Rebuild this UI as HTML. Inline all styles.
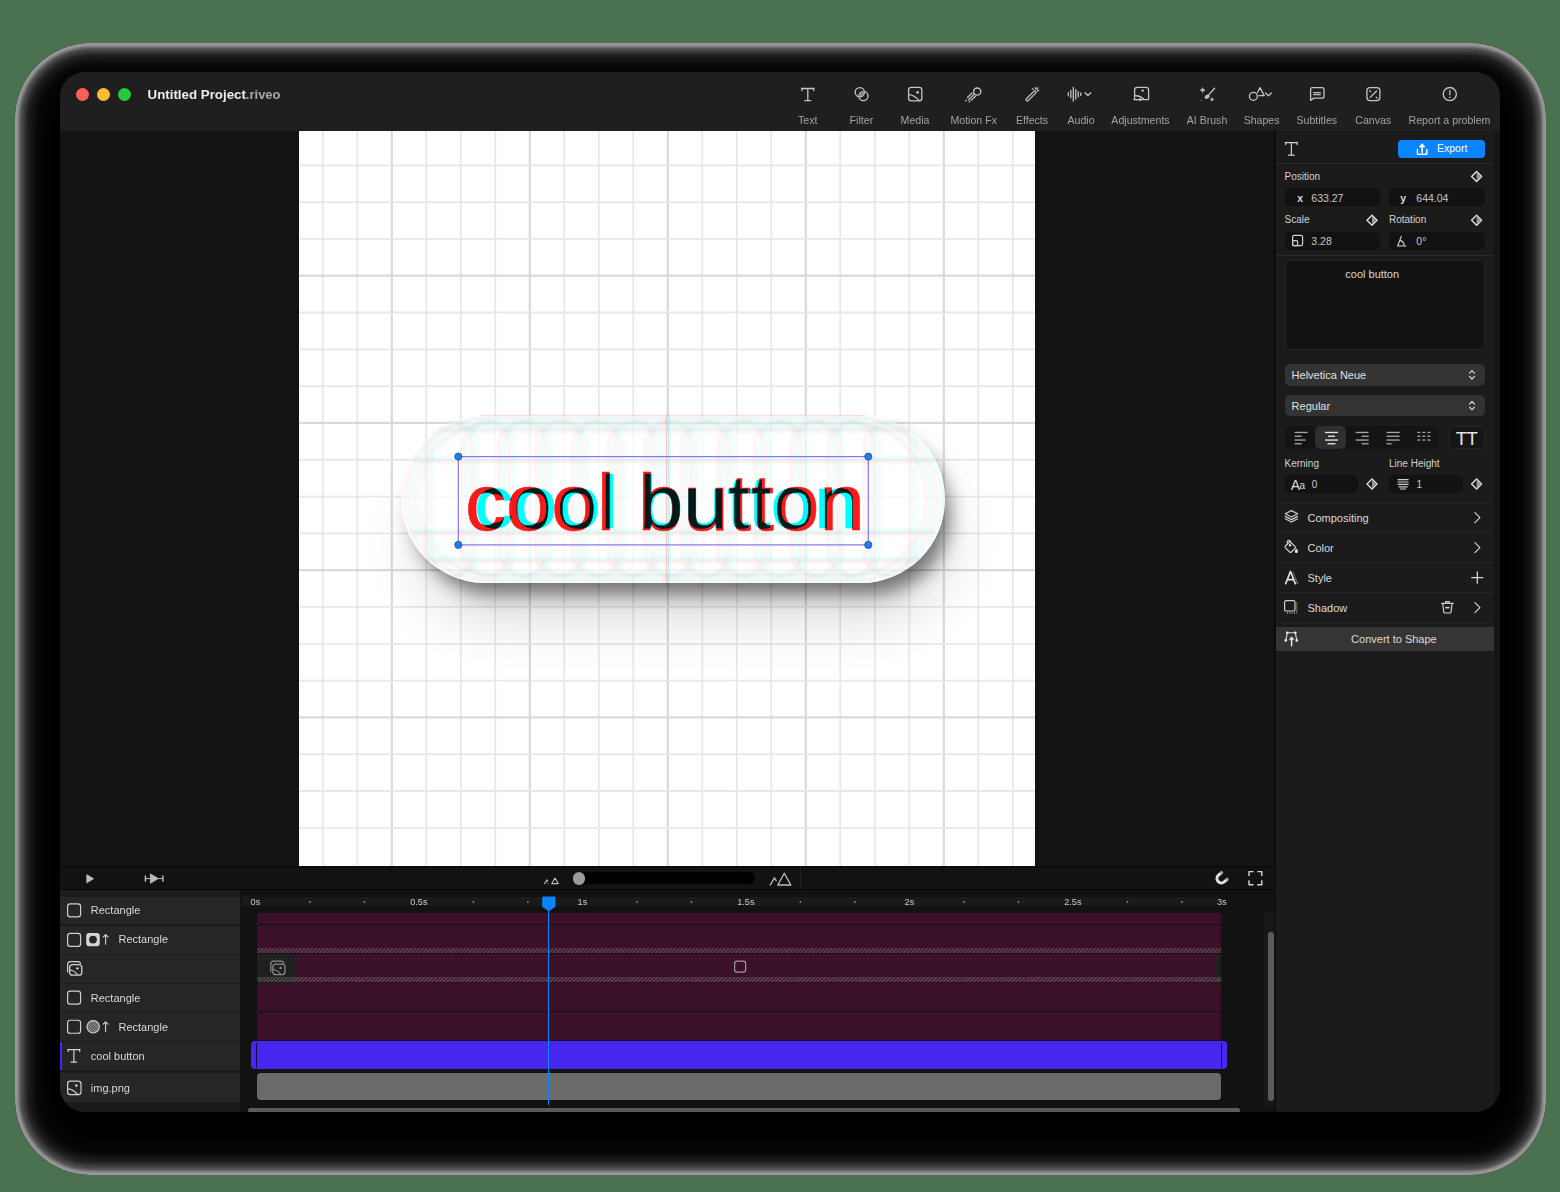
<!DOCTYPE html>
<html><head><meta charset="utf-8"><style>*{box-sizing:border-box;margin:0;padding:0}
html,body{width:1560px;height:1192px;overflow:hidden;background:#4a7150;font-family:"Liberation Sans",sans-serif;position:relative}
.a{position:absolute}
.t{position:absolute;white-space:nowrap}
#shadow{left:14.5px;top:43px;width:1531px;height:1132px;border-radius:76px;background:#000;box-shadow:inset 0 0 3px 4px rgba(200,200,200,.6),inset 0 0 5px 9px rgba(110,110,110,.6),inset 0 0 10px 15px rgba(45,45,45,.8),inset 0 -7px 12px 3px rgba(100,100,100,.4),inset 0 0 24px 20px rgba(22,22,22,.9)}
#win{left:60px;top:72px;width:1440px;height:1040px;border-radius:25px;overflow:hidden;background:#131313}
#inner{left:-60px;top:-72px;width:1560px;height:1192px}
.ctext{font-size:75px;line-height:75px;mix-blend-mode:multiply;transform-origin:50% 50%;-webkit-text-stroke:.5px currentColor;filter:blur(.3px)}
#cyan{transform:translateX(-50%) scale(1.045,1.0)}
#red{transform:translateX(-50%) scale(1.09,1.06)}
</style></head><body>
<div id="shadow" class="a"></div>
<div id="win" class="a"><div id="inner" class="a">
<div class="a" style="left:60px;top:72px;width:1440px;height:59px;background:#1f1f1f;"></div>
<div class="a" style="left:60px;top:131px;width:1215px;height:736px;background:#131313;"></div>
<div class="a" style="left:76.1px;top:88px;width:13px;height:13px;border-radius:50%;background:#fe5f57"></div>
<div class="a" style="left:97.1px;top:88px;width:13px;height:13px;border-radius:50%;background:#febc2e"></div>
<div class="a" style="left:118.1px;top:88px;width:13px;height:13px;border-radius:50%;background:#28c840"></div>
<div class="t" style="left:147.60px;top:87.74px;font-size:13.3px;line-height:13.3px;color:#ececec;font-weight:bold;">Untitled Project<span style="color:#a9a9a9;font-size:13px">.riveo</span></div>
<div class="t" style="left:807.70px;transform:translateX(-50%);top:114.63px;font-size:10.6px;line-height:10.6px;color:#a3a3a3;font-weight:normal;">Text</div>
<div class="t" style="left:861.40px;transform:translateX(-50%);top:114.63px;font-size:10.6px;line-height:10.6px;color:#a3a3a3;font-weight:normal;">Filter</div>
<div class="t" style="left:915.00px;transform:translateX(-50%);top:114.63px;font-size:10.6px;line-height:10.6px;color:#a3a3a3;font-weight:normal;">Media</div>
<div class="t" style="left:973.70px;transform:translateX(-50%);top:114.63px;font-size:10.6px;line-height:10.6px;color:#a3a3a3;font-weight:normal;">Motion Fx</div>
<div class="t" style="left:1032.00px;transform:translateX(-50%);top:114.63px;font-size:10.6px;line-height:10.6px;color:#a3a3a3;font-weight:normal;">Effects</div>
<div class="t" style="left:1081.00px;transform:translateX(-50%);top:114.63px;font-size:10.6px;line-height:10.6px;color:#a3a3a3;font-weight:normal;">Audio</div>
<div class="t" style="left:1140.50px;transform:translateX(-50%);top:114.63px;font-size:10.6px;line-height:10.6px;color:#a3a3a3;font-weight:normal;">Adjustments</div>
<div class="t" style="left:1207.00px;transform:translateX(-50%);top:114.63px;font-size:10.6px;line-height:10.6px;color:#a3a3a3;font-weight:normal;">AI Brush</div>
<div class="t" style="left:1261.60px;transform:translateX(-50%);top:114.63px;font-size:10.6px;line-height:10.6px;color:#a3a3a3;font-weight:normal;">Shapes</div>
<div class="t" style="left:1316.80px;transform:translateX(-50%);top:114.63px;font-size:10.6px;line-height:10.6px;color:#a3a3a3;font-weight:normal;">Subtitles</div>
<div class="t" style="left:1373.20px;transform:translateX(-50%);top:114.63px;font-size:10.6px;line-height:10.6px;color:#a3a3a3;font-weight:normal;">Canvas</div>
<div class="t" style="left:1449.50px;transform:translateX(-50%);top:114.63px;font-size:10.6px;line-height:10.6px;color:#a3a3a3;font-weight:normal;">Report a problem</div>
<div class="a" style="left:299px;top:131px;width:736px;height:735.3px;background:#ffffff;overflow:hidden"></div>
<svg class="a" style="left:299px;top:131px" width="736" height="735.3" viewBox="299 131 736 735.3"><line x1="322.80" y1="131" x2="322.80" y2="866.3" stroke="#e8e8e8" stroke-width="1.8"/><line x1="357.30" y1="131" x2="357.30" y2="866.3" stroke="#e8e8e8" stroke-width="1.8"/><line x1="391.80" y1="131" x2="391.80" y2="866.3" stroke="#d9d9d9" stroke-width="2.2"/><line x1="426.30" y1="131" x2="426.30" y2="866.3" stroke="#e8e8e8" stroke-width="1.8"/><line x1="460.80" y1="131" x2="460.80" y2="866.3" stroke="#e8e8e8" stroke-width="1.8"/><line x1="495.30" y1="131" x2="495.30" y2="866.3" stroke="#e8e8e8" stroke-width="1.8"/><line x1="529.80" y1="131" x2="529.80" y2="866.3" stroke="#d9d9d9" stroke-width="2.2"/><line x1="564.30" y1="131" x2="564.30" y2="866.3" stroke="#e8e8e8" stroke-width="1.8"/><line x1="598.80" y1="131" x2="598.80" y2="866.3" stroke="#e8e8e8" stroke-width="1.8"/><line x1="633.30" y1="131" x2="633.30" y2="866.3" stroke="#e8e8e8" stroke-width="1.8"/><line x1="667.80" y1="131" x2="667.80" y2="866.3" stroke="#d9d9d9" stroke-width="2.2"/><line x1="702.30" y1="131" x2="702.30" y2="866.3" stroke="#e8e8e8" stroke-width="1.8"/><line x1="736.80" y1="131" x2="736.80" y2="866.3" stroke="#e8e8e8" stroke-width="1.8"/><line x1="771.30" y1="131" x2="771.30" y2="866.3" stroke="#e8e8e8" stroke-width="1.8"/><line x1="805.80" y1="131" x2="805.80" y2="866.3" stroke="#d9d9d9" stroke-width="2.2"/><line x1="840.30" y1="131" x2="840.30" y2="866.3" stroke="#e8e8e8" stroke-width="1.8"/><line x1="874.80" y1="131" x2="874.80" y2="866.3" stroke="#e8e8e8" stroke-width="1.8"/><line x1="909.30" y1="131" x2="909.30" y2="866.3" stroke="#e8e8e8" stroke-width="1.8"/><line x1="943.80" y1="131" x2="943.80" y2="866.3" stroke="#d9d9d9" stroke-width="2.2"/><line x1="978.30" y1="131" x2="978.30" y2="866.3" stroke="#e8e8e8" stroke-width="1.8"/><line x1="1012.80" y1="131" x2="1012.80" y2="866.3" stroke="#e8e8e8" stroke-width="1.8"/><line x1="299" y1="165.30" x2="1035" y2="165.30" stroke="#e8e8e8" stroke-width="1.8"/><line x1="299" y1="202.11" x2="1035" y2="202.11" stroke="#e8e8e8" stroke-width="1.8"/><line x1="299" y1="238.91" x2="1035" y2="238.91" stroke="#e8e8e8" stroke-width="1.8"/><line x1="299" y1="275.72" x2="1035" y2="275.72" stroke="#d9d9d9" stroke-width="2.2"/><line x1="299" y1="312.52" x2="1035" y2="312.52" stroke="#e8e8e8" stroke-width="1.8"/><line x1="299" y1="349.33" x2="1035" y2="349.33" stroke="#e8e8e8" stroke-width="1.8"/><line x1="299" y1="386.14" x2="1035" y2="386.14" stroke="#e8e8e8" stroke-width="1.8"/><line x1="299" y1="422.94" x2="1035" y2="422.94" stroke="#d9d9d9" stroke-width="2.2"/><line x1="299" y1="459.75" x2="1035" y2="459.75" stroke="#e8e8e8" stroke-width="1.8"/><line x1="299" y1="496.55" x2="1035" y2="496.55" stroke="#e8e8e8" stroke-width="1.8"/><line x1="299" y1="533.36" x2="1035" y2="533.36" stroke="#e8e8e8" stroke-width="1.8"/><line x1="299" y1="570.17" x2="1035" y2="570.17" stroke="#d9d9d9" stroke-width="2.2"/><line x1="299" y1="606.97" x2="1035" y2="606.97" stroke="#e8e8e8" stroke-width="1.8"/><line x1="299" y1="643.78" x2="1035" y2="643.78" stroke="#e8e8e8" stroke-width="1.8"/><line x1="299" y1="680.58" x2="1035" y2="680.58" stroke="#e8e8e8" stroke-width="1.8"/><line x1="299" y1="717.39" x2="1035" y2="717.39" stroke="#d9d9d9" stroke-width="2.2"/><line x1="299" y1="754.20" x2="1035" y2="754.20" stroke="#e8e8e8" stroke-width="1.8"/><line x1="299" y1="791.00" x2="1035" y2="791.00" stroke="#e8e8e8" stroke-width="1.8"/><line x1="299" y1="827.81" x2="1035" y2="827.81" stroke="#e8e8e8" stroke-width="1.8"/></svg>
<div class="a" id="pillwrap" style="left:299px;top:131px;width:736px;height:735.3px;overflow:hidden">
<div class="a" style="left:102px;top:284px;width:544px;height:168px;border-radius:84px;background:rgba(255,255,255,.72);box-shadow:9px 15px 18px -4px rgba(0,0,0,.48),10px 42px 56px -8px rgba(0,0,0,.16)"></div>
</div>
<svg class="a" style="left:299px;top:131px;filter:blur(1.4px)" width="736" height="735.3" viewBox="299 131 736 735.3"><defs><clipPath id="pc"><rect x="401" y="415" width="544" height="168" rx="84"/></clipPath></defs><g clip-path="url(#pc)"><rect x="426.5" y="422" width="46" height="154" rx="23" fill="none" stroke="rgba(255,60,60,.09)" stroke-width="2.4"/><rect x="463.0" y="422" width="46" height="154" rx="23" fill="none" stroke="rgba(255,60,60,.09)" stroke-width="2.4"/><rect x="499.5" y="422" width="46" height="154" rx="23" fill="none" stroke="rgba(255,60,60,.09)" stroke-width="2.4"/><rect x="536.0" y="422" width="46" height="154" rx="23" fill="none" stroke="rgba(255,60,60,.09)" stroke-width="2.4"/><rect x="572.5" y="422" width="46" height="154" rx="23" fill="none" stroke="rgba(255,60,60,.09)" stroke-width="2.4"/><rect x="609.0" y="422" width="46" height="154" rx="23" fill="none" stroke="rgba(255,60,60,.09)" stroke-width="2.4"/><rect x="645.5" y="422" width="46" height="154" rx="23" fill="none" stroke="rgba(255,60,60,.09)" stroke-width="2.4"/><rect x="682.0" y="422" width="46" height="154" rx="23" fill="none" stroke="rgba(255,60,60,.09)" stroke-width="2.4"/><rect x="718.5" y="422" width="46" height="154" rx="23" fill="none" stroke="rgba(255,60,60,.09)" stroke-width="2.4"/><rect x="755.0" y="422" width="46" height="154" rx="23" fill="none" stroke="rgba(255,60,60,.09)" stroke-width="2.4"/><rect x="791.5" y="422" width="46" height="154" rx="23" fill="none" stroke="rgba(255,60,60,.09)" stroke-width="2.4"/><rect x="828.0" y="422" width="46" height="154" rx="23" fill="none" stroke="rgba(255,60,60,.09)" stroke-width="2.4"/><rect x="864.5" y="422" width="46" height="154" rx="23" fill="none" stroke="rgba(255,60,60,.09)" stroke-width="2.4"/><rect x="404.5" y="418.0" width="532" height="162" rx="81.0" fill="none" stroke="rgba(255,60,60,.09)" stroke-width="2.4"/><rect x="414.5" y="423.0" width="512" height="152" rx="76.0" fill="none" stroke="rgba(255,60,60,.09)" stroke-width="2.4"/><line x1="664.5" y1="416" x2="664.5" y2="582" stroke="rgba(255,60,60,.09)" stroke-width="1.6"/><line x1="412" y1="430.75" x2="935" y2="430.75" stroke="rgba(255,60,60,.09)" stroke-width="3"/><line x1="412" y1="461.25" x2="935" y2="461.25" stroke="rgba(255,60,60,.09)" stroke-width="3"/><line x1="412" y1="533.25" x2="935" y2="533.25" stroke="rgba(255,60,60,.09)" stroke-width="3"/><line x1="412" y1="561.25" x2="935" y2="561.25" stroke="rgba(255,60,60,.09)" stroke-width="3"/><rect x="431.5" y="422" width="46" height="154" rx="23" fill="none" stroke="rgba(0,235,235,.11)" stroke-width="2.4"/><rect x="468.0" y="422" width="46" height="154" rx="23" fill="none" stroke="rgba(0,235,235,.11)" stroke-width="2.4"/><rect x="504.5" y="422" width="46" height="154" rx="23" fill="none" stroke="rgba(0,235,235,.11)" stroke-width="2.4"/><rect x="541.0" y="422" width="46" height="154" rx="23" fill="none" stroke="rgba(0,235,235,.11)" stroke-width="2.4"/><rect x="577.5" y="422" width="46" height="154" rx="23" fill="none" stroke="rgba(0,235,235,.11)" stroke-width="2.4"/><rect x="614.0" y="422" width="46" height="154" rx="23" fill="none" stroke="rgba(0,235,235,.11)" stroke-width="2.4"/><rect x="650.5" y="422" width="46" height="154" rx="23" fill="none" stroke="rgba(0,235,235,.11)" stroke-width="2.4"/><rect x="687.0" y="422" width="46" height="154" rx="23" fill="none" stroke="rgba(0,235,235,.11)" stroke-width="2.4"/><rect x="723.5" y="422" width="46" height="154" rx="23" fill="none" stroke="rgba(0,235,235,.11)" stroke-width="2.4"/><rect x="760.0" y="422" width="46" height="154" rx="23" fill="none" stroke="rgba(0,235,235,.11)" stroke-width="2.4"/><rect x="796.5" y="422" width="46" height="154" rx="23" fill="none" stroke="rgba(0,235,235,.11)" stroke-width="2.4"/><rect x="833.0" y="422" width="46" height="154" rx="23" fill="none" stroke="rgba(0,235,235,.11)" stroke-width="2.4"/><rect x="869.5" y="422" width="46" height="154" rx="23" fill="none" stroke="rgba(0,235,235,.11)" stroke-width="2.4"/><rect x="409.5" y="418.0" width="532" height="162" rx="81.0" fill="none" stroke="rgba(0,235,235,.11)" stroke-width="2.4"/><rect x="419.5" y="423.0" width="512" height="152" rx="76.0" fill="none" stroke="rgba(0,235,235,.11)" stroke-width="2.4"/><line x1="669.5" y1="416" x2="669.5" y2="582" stroke="rgba(0,235,235,.11)" stroke-width="1.6"/><line x1="412" y1="428.25" x2="935" y2="428.25" stroke="rgba(0,235,235,.11)" stroke-width="3"/><line x1="412" y1="458.75" x2="935" y2="458.75" stroke="rgba(0,235,235,.11)" stroke-width="3"/><line x1="412" y1="530.75" x2="935" y2="530.75" stroke="rgba(0,235,235,.11)" stroke-width="3"/><line x1="412" y1="558.75" x2="935" y2="558.75" stroke="rgba(0,235,235,.11)" stroke-width="3"/></g></svg>
<svg class="a" style="left:299px;top:131px" width="736" height="735.3" viewBox="299 131 736 735.3"><line x1="666.4" y1="415" x2="666.4" y2="583" stroke="rgba(255,80,80,.32)" stroke-width="1"/><line x1="668.9" y1="415" x2="668.9" y2="583" stroke="rgba(0,220,230,.32)" stroke-width="1"/><path d="M480 415.4h385" stroke="rgba(255,120,120,.25)" stroke-width="1"/></svg>
<div class="a" style="left:0;top:0;width:1560px;height:1192px;isolation:auto">
<div class="t ctext" id="cyan" style="left:666px;top:465px;color:#00ffff">cool button</div>
<div class="t ctext" id="red" style="left:664.5px;top:465px;color:#ff1a1a">cool button</div>
</div>
<svg class="a" style="left:299px;top:131px" width="736" height="735.3" viewBox="299 131 736 735.3"><rect x="458.3" y="456.6" width="410" height="88.3" fill="none" stroke="#8473f2" stroke-width="1.2"/><circle cx="458.3" cy="456.6" r="3.6" fill="#1a80f0" stroke="#0b3a70" stroke-width=".6"/><circle cx="868.3" cy="456.6" r="3.6" fill="#1a80f0" stroke="#0b3a70" stroke-width=".6"/><circle cx="458.3" cy="544.9" r="3.6" fill="#1a80f0" stroke="#0b3a70" stroke-width=".6"/><circle cx="868.3" cy="544.9" r="3.6" fill="#1a80f0" stroke="#0b3a70" stroke-width=".6"/></svg>
<div class="a" style="left:1274px;top:131px;width:2px;height:981px;background:#0b0b0b;"></div>
<div class="a" style="left:1276px;top:131px;width:218px;height:981px;background:#1b1b1b;"></div>
<div class="a" style="left:1494px;top:131px;width:6px;height:981px;background:#151515;"></div>
<div class="a" style="left:1397.6px;top:140px;width:87.40000000000009px;height:18.19999999999999px;background:#0a84ff;border-radius:4px;"></div>
<div class="t" style="left:1437.00px;top:143.01px;font-size:10.5px;line-height:10.5px;color:#ffffff;font-weight:normal;">Export</div>
<div class="a" style="left:1276px;top:163px;width:218px;height:1.1999999999999886px;background:#2b2b2b;"></div>
<div class="t" style="left:1284.50px;top:171.73px;font-size:10px;line-height:10px;color:#d2d2d2;font-weight:normal;">Position</div>
<div class="a" style="left:1284.7px;top:188.3px;width:95.29999999999995px;height:17.899999999999977px;background:#121212;border-radius:5px;"></div>
<div class="a" style="left:1389.2px;top:188.3px;width:95.39999999999986px;height:17.899999999999977px;background:#121212;border-radius:5px;"></div>
<div class="t" style="left:1297.20px;top:192.61px;font-size:10.5px;line-height:10.5px;color:#d8d8d8;font-weight:bold;">x</div>
<div class="t" style="left:1311.30px;top:192.61px;font-size:10.5px;line-height:10.5px;color:#c8c8c8;font-weight:normal;">633.27</div>
<div class="t" style="left:1400.30px;top:192.61px;font-size:10.5px;line-height:10.5px;color:#d8d8d8;font-weight:bold;">y</div>
<div class="t" style="left:1416.30px;top:192.61px;font-size:10.5px;line-height:10.5px;color:#c8c8c8;font-weight:normal;">644.04</div>
<div class="t" style="left:1284.50px;top:215.34px;font-size:10px;line-height:10px;color:#d2d2d2;font-weight:normal;">Scale</div>
<div class="t" style="left:1389.00px;top:215.34px;font-size:10px;line-height:10px;color:#d2d2d2;font-weight:normal;">Rotation</div>
<div class="a" style="left:1284.7px;top:231.8px;width:95.29999999999995px;height:17.799999999999983px;background:#121212;border-radius:5px;"></div>
<div class="a" style="left:1389.2px;top:231.8px;width:95.39999999999986px;height:17.799999999999983px;background:#121212;border-radius:5px;"></div>
<div class="t" style="left:1311.30px;top:235.91px;font-size:10.5px;line-height:10.5px;color:#c8c8c8;font-weight:normal;">3.28</div>
<div class="t" style="left:1416.30px;top:235.91px;font-size:10.5px;line-height:10.5px;color:#c8c8c8;font-weight:normal;">0°</div>
<div class="a" style="left:1276px;top:254.7px;width:218px;height:1.200000000000017px;background:#2b2b2b;"></div>
<div class="a" style="left:1284.7px;top:259.6px;width:199.89999999999986px;height:90.0px;background:#121212;border-radius:5px;border:1px solid #242424"></div>
<div class="t" style="left:1372.20px;transform:translateX(-50%);top:269.29px;font-size:11px;line-height:11px;color:#d6d6d6;font-weight:normal;">cool button</div>
<div class="a" style="left:1284.7px;top:363.9px;width:199.89999999999986px;height:21.80000000000001px;background:#333333;border-radius:5px;"></div>
<div class="t" style="left:1291.60px;top:370.29px;font-size:11px;line-height:11px;color:#e0e0e0;font-weight:normal;">Helvetica Neue</div>
<div class="a" style="left:1284.7px;top:394.8px;width:199.89999999999986px;height:21.599999999999966px;background:#333333;border-radius:5px;"></div>
<div class="t" style="left:1291.60px;top:401.29px;font-size:11px;line-height:11px;color:#e0e0e0;font-weight:normal;">Regular</div>
<div class="a" style="left:1284.7px;top:425.6px;width:154.5999999999999px;height:23.599999999999966px;background:#141414;border-radius:5px;"></div>
<div class="a" style="left:1315.4px;top:425.6px;width:30.59999999999991px;height:23.599999999999966px;background:#2f2f2f;border-radius:5px;"></div>
<div class="a" style="left:1448.5px;top:425.6px;width:36.5px;height:23.599999999999966px;background:#161616;border-radius:5px;border:1px solid #262626"></div>
<div class="t" style="left:1466.60px;transform:translateX(-50%);top:429.54px;font-size:18.5px;line-height:18.5px;color:#e6e6e6;font-weight:normal;letter-spacing:-.5px">TT</div>
<div class="t" style="left:1284.50px;top:458.93px;font-size:10px;line-height:10px;color:#d2d2d2;font-weight:normal;">Kerning</div>
<div class="t" style="left:1389.00px;top:458.93px;font-size:10px;line-height:10px;color:#d2d2d2;font-weight:normal;">Line Height</div>
<div class="a" style="left:1284.7px;top:474.7px;width:73.79999999999995px;height:18.19999999999999px;background:#121212;border-radius:5px;"></div>
<div class="a" style="left:1389.2px;top:474.7px;width:74.29999999999995px;height:18.19999999999999px;background:#121212;border-radius:5px;"></div>
<div class="t" style="left:1290.80px;top:477.75px;font-size:14px;line-height:14px;color:#dcdcdc;font-weight:normal;">A</div>
<div class="t" style="left:1299.60px;top:481.13px;font-size:10px;line-height:10px;color:#dcdcdc;font-weight:normal;font-family:"Liberation Serif",serif;font-style:italic">a</div>
<div class="t" style="left:1311.80px;top:479.83px;font-size:10px;line-height:10px;color:#c8c8c8;font-weight:normal;">0</div>
<div class="t" style="left:1416.50px;top:479.83px;font-size:10px;line-height:10px;color:#c8c8c8;font-weight:normal;">1</div>
<div class="a" style="left:1276px;top:502.2px;width:218px;height:1.1999999999999886px;background:#252525;"></div>
<div class="t" style="left:1307.50px;top:512.69px;font-size:11px;line-height:11px;color:#dadada;font-weight:normal;">Compositing</div>
<div class="a" style="left:1276px;top:531.8px;width:218px;height:1.2000000000000455px;background:#252525;"></div>
<div class="t" style="left:1307.50px;top:542.69px;font-size:11px;line-height:11px;color:#dadada;font-weight:normal;">Color</div>
<div class="a" style="left:1276px;top:561.8px;width:218px;height:1.2000000000000455px;background:#252525;"></div>
<div class="t" style="left:1307.50px;top:572.69px;font-size:11px;line-height:11px;color:#dadada;font-weight:normal;">Style</div>
<div class="a" style="left:1276px;top:591.8px;width:218px;height:1.2000000000000455px;background:#252525;"></div>
<div class="t" style="left:1307.50px;top:602.69px;font-size:11px;line-height:11px;color:#dadada;font-weight:normal;">Shadow</div>
<div class="a" style="left:1276px;top:622px;width:218px;height:1.2000000000000455px;background:#252525;"></div>
<div class="a" style="left:1276px;top:627.1px;width:218px;height:24.100000000000023px;background:#353535;"></div>
<div class="t" style="left:1393.90px;transform:translateX(-50%);top:633.69px;font-size:11px;line-height:11px;color:#dcdcdc;font-weight:normal;">Convert to Shape</div>
<div class="a" style="left:60px;top:866.3px;width:1215px;height:22.700000000000045px;background:#121212;"></div>
<div class="a" style="left:60px;top:866.3px;width:1215px;height:1.5px;background:#0c0c0c;"></div>
<div class="a" style="left:60px;top:889px;width:1215px;height:1.3999999999999773px;background:#050505;"></div>
<div class="a" style="left:800px;top:867px;width:1px;height:22px;background:#1e1e1e;"></div>
<div class="a" style="left:573.8px;top:872.3px;width:181.60000000000002px;height:11.900000000000091px;background:#000000;border-radius:6px;"></div>
<div class="a" style="left:572.6px;top:871.8000000000001px;width:12.8px;height:12.8px;border-radius:50%;background:#9c9c9c"></div>
<div class="a" style="left:60px;top:890.4px;width:180px;height:221.60000000000002px;background:#1b1b1b;"></div>
<div class="a" style="left:240px;top:890.4px;width:1035px;height:221.60000000000002px;background:#121212;"></div>
<div class="a" style="left:242px;top:896.6px;width:975px;height:9.399999999999977px;background:#1a1a1a;"></div>
<div class="a" style="left:1264px;top:912px;width:11px;height:194px;background:#171717;"></div>
<div class="a" style="left:60px;top:896.5px;width:180px;height:27.899999999999977px;background:#262626;"></div>
<div class="a" style="left:60px;top:925.6px;width:180px;height:28.600000000000023px;background:#262626;"></div>
<div class="a" style="left:60px;top:955.4px;width:180px;height:27.600000000000023px;background:#262626;"></div>
<div class="a" style="left:60px;top:983.8px;width:180px;height:28.0px;background:#262626;"></div>
<div class="a" style="left:60px;top:1012.8px;width:180px;height:28.100000000000136px;background:#262626;"></div>
<div class="a" style="left:60px;top:1041.9px;width:180px;height:28.5px;background:#262626;"></div>
<div class="a" style="left:60px;top:1073px;width:180px;height:29.40000000000009px;background:#262626;"></div>
<div class="a" style="left:60px;top:1041.9px;width:2.200000000000003px;height:28.5px;background:#4128f5;"></div>
<div class="t" style="left:90.80px;top:905.49px;font-size:11px;line-height:11px;color:#d8d8d8;font-weight:normal;">Rectangle</div>
<div class="t" style="left:118.50px;top:934.49px;font-size:11px;line-height:11px;color:#d8d8d8;font-weight:normal;">Rectangle</div>
<div class="t" style="left:90.80px;top:993.09px;font-size:11px;line-height:11px;color:#d8d8d8;font-weight:normal;">Rectangle</div>
<div class="t" style="left:118.50px;top:1022.09px;font-size:11px;line-height:11px;color:#d8d8d8;font-weight:normal;">Rectangle</div>
<div class="t" style="left:90.80px;top:1051.09px;font-size:11px;line-height:11px;color:#d8d8d8;font-weight:normal;">cool button</div>
<div class="t" style="left:90.80px;top:1082.69px;font-size:11px;line-height:11px;color:#d8d8d8;font-weight:normal;">img.png</div>
<div class="t" style="left:255.40px;transform:translateX(-50%);top:897.81px;font-size:9.2px;line-height:9.2px;color:#c8c8c8;font-weight:normal;">0s</div>
<div class="t" style="left:418.90px;transform:translateX(-50%);top:897.81px;font-size:9.2px;line-height:9.2px;color:#c8c8c8;font-weight:normal;">0.5s</div>
<div class="t" style="left:582.40px;transform:translateX(-50%);top:897.81px;font-size:9.2px;line-height:9.2px;color:#c8c8c8;font-weight:normal;">1s</div>
<div class="t" style="left:745.90px;transform:translateX(-50%);top:897.81px;font-size:9.2px;line-height:9.2px;color:#c8c8c8;font-weight:normal;">1.5s</div>
<div class="t" style="left:909.40px;transform:translateX(-50%);top:897.81px;font-size:9.2px;line-height:9.2px;color:#c8c8c8;font-weight:normal;">2s</div>
<div class="t" style="left:1072.90px;transform:translateX(-50%);top:897.81px;font-size:9.2px;line-height:9.2px;color:#c8c8c8;font-weight:normal;">2.5s</div>
<div class="t" style="left:1226.60px;transform:translateX(-100%);top:897.81px;font-size:9.2px;line-height:9.2px;color:#c8c8c8;font-weight:normal;">3s</div>
<div class="a" style="left:257.4px;top:912.9px;width:963.9px;height:10.899999999999977px;background:#3b1129;border-radius:3px;border-radius:3px 3px 0 0"></div>
<div class="a" style="left:257.4px;top:925px;width:963.9px;height:23.200000000000045px;background:#3b1129;border-radius:3px;border-radius:3px 3px 0 0"></div>
<div class="a" style="left:257.4px;top:948.2px;width:963.9px;height:4.7999999999999545px;background:#3b1129;"></div>
<div class="a" style="left:257.4px;top:954.4px;width:963.9px;height:22.600000000000023px;background:#202020;"></div>
<div class="a" style="left:294.7px;top:954.4px;width:920.8px;height:22.600000000000023px;background:#3b1129;border-radius:4px;border-radius:5px 5px 0 0"></div>
<div class="a" style="left:257.4px;top:977px;width:963.9px;height:5.2000000000000455px;background:#222222;"></div>
<div class="a" style="left:294.7px;top:977px;width:920.8px;height:5.2000000000000455px;background:#3b1129;"></div>
<div class="a" style="left:257.4px;top:983.1px;width:963.9px;height:27.899999999999977px;background:#3b1129;border-radius:3px;border-radius:3px 3px 0 0"></div>
<div class="a" style="left:257.4px;top:1012.4px;width:963.9px;height:27.699999999999932px;background:#3b1129;"></div>
<div class="a" style="left:250.9px;top:1041.2px;width:976.4px;height:27.799999999999955px;background:#4527f0;border-radius:4px;"></div>
<div class="a" style="left:256.4px;top:1042.6px;width:1.0px;height:25.0px;background:#140a44;"></div>
<div class="a" style="left:1221.3px;top:1042.6px;width:1.0px;height:25.0px;background:#140a44;"></div>
<div class="a" style="left:257.4px;top:1073.1px;width:963.9px;height:27.40000000000009px;background:#696a69;border-radius:4px;"></div>
<svg class="a" style="left:0;top:0" width="1560" height="1192" viewBox="0 0 1560 1192"><defs><pattern id="htch" width="2.7" height="2.7" patternUnits="userSpaceOnUse" patternTransform="rotate(45)"><rect width="1.2" height="2.7" fill="rgba(175,175,175,.42)"/></pattern></defs><rect x="257.4" y="948.2" width="963.9" height="4.8" fill="url(#htch)"/><rect x="257.4" y="977" width="963.9" height="5.2" fill="url(#htch)"/></svg>
<div class="a" style="left:1267.5px;top:931.7px;width:6.2000000000000455px;height:169.0px;background:#5b5b5b;border-radius:3px;"></div>
<div class="a" style="left:248px;top:1108.2px;width:992px;height:4.7999999999999545px;background:#5b5b5b;border-radius:3px;"></div>
<div class="a" style="left:548.1px;top:910px;width:1.1999999999999318px;height:195px;background:#0a84ff;"></div>
<svg class="a" style="left:0;top:0" width="1560" height="1192" viewBox="0 0 1560 1192">
<path d="M801.5 88.5h12.5M802 88.2v2.3M813.6 88.2v2.3M807.8 88.5v12M804.8 100.6h6" stroke="#c4c4c4" fill="none" stroke-width="1.3" stroke-linecap="round" stroke-linejoin="round"/>
<circle cx="859.8" cy="92.2" r="4.6" stroke="#c4c4c4" fill="none" stroke-width="1.3" stroke-linecap="round" stroke-linejoin="round"/><circle cx="863.4" cy="96" r="4.6" stroke="#c4c4c4" fill="none" stroke-width="1.3" stroke-linecap="round" stroke-linejoin="round"/>
<path d="M859 96.3a4.6 4.6 0 0 1 5.2-5.3a4.6 4.6 0 0 1-5.2 5.3z" fill="#8a8a8a"/>
<rect x="908.6" y="87.4" width="13.2" height="13.4" rx="2.6" stroke="#c4c4c4" fill="none" stroke-width="1.3" stroke-linecap="round" stroke-linejoin="round"/><circle cx="917.6" cy="92.4" r="1.4" fill="#c4c4c4"/><path d="M908.8 94.6c3.4 0 7.5 2.8 10.5 6" stroke="#c4c4c4" fill="none" stroke-width="1.3" stroke-linecap="round" stroke-linejoin="round"/>
<circle cx="977.2" cy="91.6" r="3.6" stroke="#c4c4c4" fill="none" stroke-width="1.3" stroke-linecap="round" stroke-linejoin="round"/><path d="M974.3 94.1l-5.6 5.6M972 93l-4.5 4.5M975.4 96.2l-4.2 4.2M966.2 100.3l-.4.4M969.6 101.4l-.4.4" stroke="#c4c4c4" fill="none" stroke-width="1.3" stroke-linecap="round" stroke-linejoin="round"/>
<path d="M1026.4 98.8l8.2-8.2l1.8 1.8l-8.2 8.2a1.3 1.3 0 0 1-1.8 0a1.3 1.3 0 0 1 0-1.8z" stroke="#c4c4c4" fill="none" stroke-width="1.3" stroke-linecap="round" stroke-linejoin="round"/><path d="M1035.6 87.5v1.6M1038.8 90.6h-1.6M1038 88l-1.1 1.1M1032.4 88.6l.8.8" stroke="#c4c4c4" fill="none" stroke-width="1.3" stroke-linecap="round" stroke-linejoin="round"/>
<path d="M1068.3 92.6v3.2M1070.8 90.4v7.4M1073.3 87.4v13.6M1075.8 89.4v9.6M1078.3 91.6v5.2M1080.8 93v2.4" stroke="#c4c4c4" fill="none" stroke-width="1.3" stroke-linecap="round" stroke-linejoin="round"/><path d="M1085 92.8l2.9 2.7l2.9-2.7" stroke="#c4c4c4" fill="none" stroke-width="1.3" stroke-linecap="round" stroke-linejoin="round"/>
<path d="M1134.6 98.5v-8.4a2.8 2.8 0 0 1 2.8-2.8h8.4a2.8 2.8 0 0 1 2.8 2.8v8.4M1133.7 99.6h14.8" stroke="#c4c4c4" fill="none" stroke-width="1.3" stroke-linecap="round" stroke-linejoin="round"/><path d="M1134.8 95.5c3 0 6 1 8.5 3M1137 99.6v.2" stroke="#c4c4c4" fill="none" stroke-width="1.3" stroke-linecap="round" stroke-linejoin="round"/><circle cx="1142.6" cy="90.6" r="1.2" fill="#c4c4c4"/><circle cx="1140" cy="99.6" r="1.3" fill="#c4c4c4"/>
<path d="M1214.6 88.2l-6.3 7.2" stroke="#c4c4c4" fill="none" stroke-width="1.3" stroke-linecap="round" stroke-linejoin="round"/><path d="M1208.4 95.2c-1.6-.2-3 1-3.2 2.8c1.6.6 3.4-.2 3.8-1.6z" fill="#c4c4c4" stroke="#c4c4c4" fill="none" stroke-width="1.3" stroke-linecap="round" stroke-linejoin="round"/><path d="M1202.6 87.6l.7 1.8l1.8.7l-1.8.7l-.7 1.8l-.7-1.8l-1.8-.7l1.8-.7z" fill="#c4c4c4" stroke="#c4c4c4" stroke-width=".6"/><path d="M1212 97.6l.5 1.3l1.3.5l-1.3.5l-.5 1.3l-.5-1.3l-1.3-.5l1.3-.5z" fill="#c4c4c4" stroke="#c4c4c4" stroke-width=".6"/><circle cx="1201.2" cy="100.3" r=".5" fill="#c4c4c4"/>
<circle cx="1253.4" cy="96.3" r="4" stroke="#c4c4c4" fill="none" stroke-width="1.3" stroke-linecap="round" stroke-linejoin="round"/><path d="M1257.6 92.2l2.4-4.6l4.2 8h-5.2" stroke="#c4c4c4" fill="none" stroke-width="1.3" stroke-linecap="round" stroke-linejoin="round"/><path d="M1265.6 93l2.9 2.7l2.9-2.7" stroke="#c4c4c4" fill="none" stroke-width="1.3" stroke-linecap="round" stroke-linejoin="round"/>
<path d="M1312.5 87.6h9.6a1.9 1.9 0 0 1 1.9 1.9v6.7a1.9 1.9 0 0 1-1.9 1.9h-8.2l-3.3 2.3v-10.9a1.9 1.9 0 0 1 1.9-1.9z" stroke="#c4c4c4" fill="none" stroke-width="1.3" stroke-linecap="round" stroke-linejoin="round"/><path d="M1313.2 92.7h7.6M1313.2 94.7h7.6" stroke="#c4c4c4" stroke-width="1.2"/>
<rect x="1366.9" y="87.6" width="13" height="13" rx="3" stroke="#c4c4c4" fill="none" stroke-width="1.3" stroke-linecap="round" stroke-linejoin="round"/><path d="M1370.2 97.4l6.4-6.4M1369.8 90.8l.8.8M1376.2 97.2l.8.8" stroke="#c4c4c4" fill="none" stroke-width="1.3" stroke-linecap="round" stroke-linejoin="round"/>
<circle cx="1449.8" cy="94.1" r="6.6" stroke="#c4c4c4" fill="none" stroke-width="1.3" stroke-linecap="round" stroke-linejoin="round"/><path d="M1449.8 90.6v4.2" stroke="#c4c4c4" fill="none" stroke-width="1.3" stroke-linecap="round" stroke-linejoin="round"/><circle cx="1449.8" cy="97.4" r=".8" fill="#c4c4c4"/>
<path d="M1417.4 149.4v4.8h9.4v-4.8" stroke="#fff" fill="none" stroke-width="1.4" stroke-linecap="round" stroke-linejoin="round"/><path d="M1422.1 152.2v-6.6" stroke="#fff" stroke-width="1.6" stroke-linecap="round"/><path d="M1419.3 147l2.8-3.4l2.8 3.4z" fill="#fff" stroke="#fff" stroke-width=".8" stroke-linejoin="round"/>
<path d="M1285.3 142.7h12.2M1285.6 142.4v2.2M1297.2 142.4v2.2M1291.4 142.7v12.4M1288.6 155.2h5.6" stroke="#cfcfcf" fill="none" stroke-width="1.2" stroke-linecap="round" stroke-linejoin="round"/>
<path d="M1476.6 171.4l5 5l-5 5l-5-5z" fill="#1b1b1b" stroke="#e0e0e0" stroke-width="1.4" stroke-linejoin="round"/><path d="M1476.6 172.4l4 4l-4 4z" fill="#9a9a9a"/>
<path d="M1372 215.2l5 5l-5 5l-5-5z" fill="#1b1b1b" stroke="#e0e0e0" stroke-width="1.4" stroke-linejoin="round"/><path d="M1372 216.2l4 4l-4 4z" fill="#9a9a9a"/>
<path d="M1476.6 215.2l5 5l-5 5l-5-5z" fill="#1b1b1b" stroke="#e0e0e0" stroke-width="1.4" stroke-linejoin="round"/><path d="M1476.6 216.2l4 4l-4 4z" fill="#9a9a9a"/>
<rect x="1292.6" y="235.4" width="10" height="10.2" rx="1.6" stroke="#cfcfcf" fill="none" stroke-width="1.2" stroke-linecap="round" stroke-linejoin="round"/><rect x="1292.6" y="240.6" width="5" height="5" rx="1" stroke="#cfcfcf" fill="none" stroke-width="1.2" stroke-linecap="round" stroke-linejoin="round" stroke-width="1.4"/>
<path d="M1397.7 246h8.2M1397.7 246l3.6-9.6M1400.8 240.6c1.8.6 3.2 2.6 3.4 5.2" stroke="#cfcfcf" fill="none" stroke-width="1.2" stroke-linecap="round" stroke-linejoin="round"/>
<path d="M1469.6 373.19999999999993l2.4-2.6l2.4 2.6M1469.6 376.4l2.4 2.6l2.4-2.6" stroke="#d8d8d8" fill="none" stroke-width="1.2" stroke-linecap="round" stroke-linejoin="round"/>
<path d="M1469.6 404.0l2.4-2.6l2.4 2.6M1469.6 407.20000000000005l2.4 2.6l2.4-2.6" stroke="#d8d8d8" fill="none" stroke-width="1.2" stroke-linecap="round" stroke-linejoin="round"/>
<rect x="1294.6" y="431.8" width="13" height="1.3" fill="#a8a8a8"/><rect x="1294.6" y="435.6" width="7" height="1.3" fill="#a8a8a8"/><rect x="1294.6" y="439.4" width="11" height="1.3" fill="#a8a8a8"/><rect x="1294.6" y="443.1" width="7" height="1.3" fill="#a8a8a8"/>
<rect x="1325" y="431.8" width="13" height="1.3" fill="#e8e8e8"/><rect x="1328" y="435.6" width="7" height="1.3" fill="#e8e8e8"/><rect x="1325" y="439.4" width="13" height="1.3" fill="#e8e8e8"/><rect x="1327.5" y="443.1" width="8" height="1.3" fill="#e8e8e8"/>
<rect x="1355.6" y="431.8" width="13" height="1.3" fill="#a8a8a8"/><rect x="1361.6" y="435.6" width="7" height="1.3" fill="#a8a8a8"/><rect x="1355.6" y="439.4" width="13" height="1.3" fill="#a8a8a8"/><rect x="1361.6" y="443.1" width="7" height="1.3" fill="#a8a8a8"/>
<rect x="1386.6" y="431.8" width="13" height="1.3" fill="#a8a8a8"/><rect x="1386.6" y="435.6" width="13" height="1.3" fill="#a8a8a8"/><rect x="1386.6" y="439.4" width="13" height="1.3" fill="#a8a8a8"/><rect x="1386.6" y="443.1" width="5" height="1.3" fill="#a8a8a8"/>
<rect x="1417.4" y="431.8" width="3" height="1.3" fill="#a8a8a8"/><rect x="1422.4" y="431.8" width="3" height="1.3" fill="#a8a8a8"/><rect x="1427.4" y="431.8" width="3" height="1.3" fill="#a8a8a8"/><rect x="1417.4" y="435.6" width="3" height="1.3" fill="#a8a8a8"/><rect x="1422.4" y="435.6" width="3" height="1.3" fill="#a8a8a8"/><rect x="1427.4" y="435.6" width="3" height="1.3" fill="#a8a8a8"/><rect x="1417.4" y="439.4" width="3" height="1.3" fill="#a8a8a8"/><rect x="1422.4" y="439.4" width="3" height="1.3" fill="#a8a8a8"/><rect x="1427.4" y="439.4" width="3" height="1.3" fill="#a8a8a8"/>
<path d="M1372 479l5 5l-5 5l-5-5z" fill="#1b1b1b" stroke="#e0e0e0" stroke-width="1.4" stroke-linejoin="round"/><path d="M1372 480l4 4l-4 4z" fill="#9a9a9a"/>
<path d="M1476.6 479l5 5l-5 5l-5-5z" fill="#1b1b1b" stroke="#e0e0e0" stroke-width="1.4" stroke-linejoin="round"/><path d="M1476.6 480l4 4l-4 4z" fill="#9a9a9a"/>
<path d="M1397.6 479.6h11M1397.6 482h11M1397.6 484.4h11M1398.6 486.8h9M1400 489h6" stroke="#d0d0d0" stroke-width="1.2"/>
<path d="M1474.9 512.6l5 5l-5 5" stroke="#cfcfcf" fill="none" stroke-width="1.2" stroke-linecap="round" stroke-linejoin="round"/>
<path d="M1474.9 542.6l5 5l-5 5" stroke="#cfcfcf" fill="none" stroke-width="1.2" stroke-linecap="round" stroke-linejoin="round"/>
<path d="M1474.9 602.6l5 5l-5 5" stroke="#cfcfcf" fill="none" stroke-width="1.2" stroke-linecap="round" stroke-linejoin="round"/>
<path d="M1471.7 577.6h11.2M1477.3 572v11.2" stroke="#d6d6d6" stroke-width="1.3" stroke-linecap="round"/>
<path d="M1291.4 510.6l6.2 3.2l-6.2 3.2l-6.2-3.2z" stroke="#cfcfcf" fill="none" stroke-width="1.2" stroke-linecap="round" stroke-linejoin="round"/><path d="M1285.2 516.4l6.2 3.2l6.2-3.2M1285.2 518.8l6.2 3.2l6.2-3.2" stroke="#cfcfcf" fill="none" stroke-width="1.2" stroke-linecap="round" stroke-linejoin="round"/>
<path d="M1289.9 541.4l5.2 5.2a1.3 1.3 0 0 1 0 1.8l-3.6 3.6a1.3 1.3 0 0 1-1.8 0l-4.2-4.2a1.3 1.3 0 0 1 0-1.8z" stroke="#cfcfcf" fill="none" stroke-width="1.2" stroke-linecap="round" stroke-linejoin="round"/><path d="M1287.6 543.6c-.9-1.6-.2-3 1.2-3.2c1.2-.2 2 1 1.8 2.6" stroke="#cfcfcf" fill="none" stroke-width="1.2" stroke-linecap="round" stroke-linejoin="round" stroke-width="1"/><circle cx="1290" cy="545.2" r="1.2" fill="#dcdcdc"/><path d="M1296.4 548.6c.9 1.2 1.5 2.1 1.5 2.8a1.5 1.5 0 0 1-3 0c0-.7.6-1.6 1.5-2.8z" fill="#e6e6e6"/>
<path d="M1285.4 584.4l5.1-13l5.1 13M1287.3 579.6h6.4" stroke="#e4e4e4" stroke-width="1.6" fill="none" stroke-linejoin="round"/><path d="M1293.2 572.6l4.8 12" stroke="#bdbdbd" stroke-width="1.2" stroke-dasharray="1 1.2" fill="none"/>
<rect x="1284.6" y="600.6" width="10.4" height="10.4" rx="1.6" stroke="#cfcfcf" fill="none" stroke-width="1.2" stroke-linecap="round" stroke-linejoin="round"/><path d="M1296.8 602.6v10.4h-10.4" stroke="#cfcfcf" stroke-width="1" stroke-dasharray="1.2 1.2" fill="none"/>
<path d="M1441.6 603.4h11.6M1445.6 603.2v-1.6h3.6v1.6M1442.8 603.6l.9 8.2a1.4 1.4 0 0 0 1.4 1.2h4.6a1.4 1.4 0 0 0 1.4-1.2l.9-8.2" stroke="#cfcfcf" fill="none" stroke-width="1.2" stroke-linecap="round" stroke-linejoin="round"/><path d="M1445.2 607.6h4.4" stroke="#cfcfcf" stroke-width="1.6"/>
<path d="M1285.8 640.4l1.5-7.6h8l1.5 7.6" stroke="#d8d8d8" stroke-width="1.1" fill="none"/><path d="M1291.6 645.8v-8" stroke="#e8e8e8" stroke-width="1.5" stroke-linecap="round"/><path d="M1289.3 639.6l2.3-2.8l2.3 2.8z" fill="#e8e8e8" stroke="#e8e8e8" stroke-width=".6" stroke-linejoin="round"/><circle cx="1287.3" cy="632.8" r="1.3" fill="#ececec"/><circle cx="1295.3" cy="632.8" r="1.3" fill="#ececec"/><circle cx="1285.8" cy="640.4" r="1.3" fill="#ececec"/><circle cx="1296.8" cy="640.4" r="1.3" fill="#ececec"/>
<path d="M86.4 874l7.8 4.8l-7.8 4.8z" fill="#bdbdbd"/>
<path d="M150.4 873.9l7.9 4.7l-7.9 4.7z" fill="#bdbdbd" stroke="#bdbdbd" stroke-width=".8" stroke-linejoin="round"/><path d="M145.6 878.6h4.8M158.2 878.6h4.4" stroke="#bdbdbd" stroke-width="1"/><path d="M145.4 876v5.2M162.9 876v5.2" stroke="#bdbdbd" stroke-width="1.4" stroke-linecap="round"/>
<path d="M551.8 883.6l3.2-5.6l3.2 5.6z" fill="none" stroke="#bdbdbd" stroke-width="1.1" stroke-linejoin="round"/><path d="M544.6 883.6l2.2-3.6l1 1.4M548 883.6h0" stroke="#bdbdbd" stroke-width="1.1" fill="none" stroke-linecap="round"/>
<path d="M777.8 885l6.5-11.8l6.5 11.8z" fill="none" stroke="#bdbdbd" stroke-width="1.3" stroke-linejoin="round"/><path d="M770.2 885l4.2-7.2l1.8 2.8" stroke="#bdbdbd" stroke-width="1.3" fill="none" stroke-linecap="round" stroke-linejoin="round"/>
<g transform="rotate(-40 1220.6 878.6)"><path d="M1225.6 874.6h-4.4a4.4 4.4 0 0 0 0 8.8h4.4" stroke="#e0e0e0" stroke-width="3" fill="none"/><path d="M1224 874.6h2.6M1224 883.4h2.6" stroke="#9a9a9a" stroke-width="3"/></g>
<path d="M1249 875.6v-4h4M1257.8 871.6h4v4M1261.8 880.8v4h-4M1253 884.8h-4v-4" stroke="#d6d6d6" stroke-width="1.4" fill="none" stroke-linecap="round" stroke-linejoin="round"/>
<rect x="67.6" y="903.85" width="13" height="13" rx="2.6" stroke="#cfcfcf" fill="none" stroke-width="1.2" stroke-linecap="round" stroke-linejoin="round" stroke-width="1.3"/>
<rect x="67.6" y="933.3000000000001" width="13" height="13" rx="2.6" stroke="#cfcfcf" fill="none" stroke-width="1.2" stroke-linecap="round" stroke-linejoin="round" stroke-width="1.3"/>
<rect x="67.6" y="991.1999999999999" width="13" height="13" rx="2.6" stroke="#cfcfcf" fill="none" stroke-width="1.2" stroke-linecap="round" stroke-linejoin="round" stroke-width="1.3"/>
<rect x="67.6" y="1020.2499999999999" width="13" height="13" rx="2.6" stroke="#cfcfcf" fill="none" stroke-width="1.2" stroke-linecap="round" stroke-linejoin="round" stroke-width="1.3"/>
<rect x="86.2" y="932.9" width="13.6" height="13.3" rx="3" fill="#d4d4d4"/><circle cx="93" cy="939.6" r="3.9" fill="#262626"/>
<path d="M105.6 944.2v-9.4M103.2 937l2.4-2.4l2.4 2.4" stroke="#cfcfcf" stroke-width="1.1" fill="none" stroke-linecap="round" stroke-linejoin="round"/>
<defs><pattern id="chk" width="2.4" height="2.4" patternUnits="userSpaceOnUse"><rect width="1.2" height="1.2" fill="#bdbdbd"/><rect x="1.2" y="1.2" width="1.2" height="1.2" fill="#bdbdbd"/></pattern></defs>
<circle cx="93.2" cy="1026.8" r="6.2" fill="url(#chk)" stroke="#cfcfcf" stroke-width="1.2"/>
<path d="M105.6 1031.4v-9.4M103.2 1024.2l2.4-2.4l2.4 2.4" stroke="#cfcfcf" stroke-width="1.1" fill="none" stroke-linecap="round" stroke-linejoin="round"/>
<path d="M67.6 972.0v-7.4a3 3 0 0 1 3-3h7.2a3 3 0 0 1 2.8 1.9" stroke="#cfcfcf" stroke-width="1.2" fill="none" stroke-linecap="round"/><rect x="69.6" y="964.6" width="12.2" height="10.6" rx="3" stroke="#cfcfcf" stroke-width="1.3" fill="none"/><circle cx="77.4" cy="968.4" r="1.2" fill="#cfcfcf"/><path d="M69.9 970.0c2.8 .2 5.6 2 7.8 5" stroke="#cfcfcf" stroke-width="1.2" fill="none"/>
<path d="M67.8 1049.6h12.2M68.1 1049.3v2.2M79.7 1049.3v2.2M73.9 1049.6v12.4M71.1 1062.1h5.6" stroke="#cfcfcf" fill="none" stroke-width="1.2" stroke-linecap="round" stroke-linejoin="round"/>
<rect x="67.6" y="1081.2" width="13.4" height="13.4" rx="2.6" stroke="#cfcfcf" fill="none" stroke-width="1.2" stroke-linecap="round" stroke-linejoin="round" stroke-width="1.3"/><circle cx="76.4" cy="1085.6" r="1.3" fill="#cfcfcf"/><path d="M67.9 1088.8c3.4 0 7.2 2.6 10 5.8" stroke="#cfcfcf" fill="none" stroke-width="1.2" stroke-linecap="round" stroke-linejoin="round"/>
<circle cx="309.90" cy="902" r=".9" fill="#8a8a8a"/>
<circle cx="364.40" cy="902" r=".9" fill="#8a8a8a"/>
<circle cx="473.40" cy="902" r=".9" fill="#8a8a8a"/>
<circle cx="527.90" cy="902" r=".9" fill="#8a8a8a"/>
<circle cx="636.90" cy="902" r=".9" fill="#8a8a8a"/>
<circle cx="691.40" cy="902" r=".9" fill="#8a8a8a"/>
<circle cx="800.40" cy="902" r=".9" fill="#8a8a8a"/>
<circle cx="854.90" cy="902" r=".9" fill="#8a8a8a"/>
<circle cx="963.90" cy="902" r=".9" fill="#8a8a8a"/>
<circle cx="1018.40" cy="902" r=".9" fill="#8a8a8a"/>
<circle cx="1127.40" cy="902" r=".9" fill="#8a8a8a"/>
<circle cx="1181.90" cy="902" r=".9" fill="#8a8a8a"/>
<path d="M270.8 971.5v-7.4a3 3 0 0 1 3-3h7.2a3 3 0 0 1 2.8 1.9" stroke="#8a8a8a" stroke-width="1.2" fill="none" stroke-linecap="round"/><rect x="272.8" y="964.1" width="12.2" height="10.6" rx="3" stroke="#8a8a8a" stroke-width="1.3" fill="none"/><circle cx="280.59999999999997" cy="967.9" r="1.2" fill="#8a8a8a"/><path d="M273.09999999999997 969.5c2.8 .2 5.6 2 7.8 5" stroke="#8a8a8a" stroke-width="1.2" fill="none"/>
<rect x="734.6" y="961.2" width="11" height="11" rx="2.4" stroke="#9a9a9a" stroke-width="1.2" fill="none"/>
<path d="M542.2 897.8a1.4 1.4 0 0 1 1.4-1.4h10.4a1.4 1.4 0 0 1 1.4 1.4v9l-6.6 4.4l-6.6-4.4z" fill="#0a84ff"/>
</svg>
</div></div>
</body></html>
